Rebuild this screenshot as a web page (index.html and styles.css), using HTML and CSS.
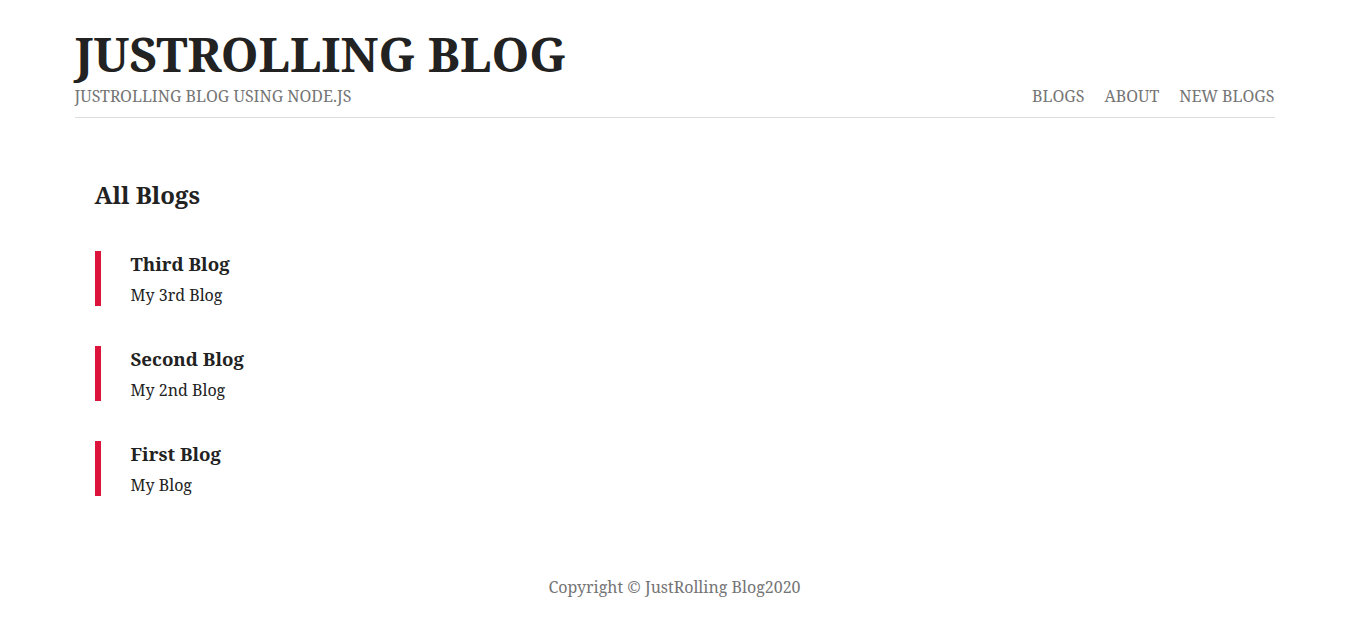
FILE: index.html
```html
<!DOCTYPE html>
<html>
<head>
<meta charset="utf-8">
<link rel="stylesheet" href="styles.css">
</head>
<body>
<div class="container">
  <header class="header">
    <h1 class="site-title">JUSTROLLING BLOG</h1>
    <div class="header-bottom">
      <p class="tagline">JUSTROLLING BLOG USING NODE.JS</p>
      <nav class="nav">
        <a href="#">BLOGS</a>
        <a href="#">ABOUT</a>
        <a href="#">NEW BLOGS</a>
      </nav>
    </div>
  </header>
  <main class="content">
    <h2 class="section-title">All Blogs</h2>
    <div class="post">
      <h3 class="post-title">Third Blog</h3>
      <p class="post-snippet">My 3rd Blog</p>
    </div>
    <div class="post">
      <h3 class="post-title">Second Blog</h3>
      <p class="post-snippet">My 2nd Blog</p>
    </div>
    <div class="post">
      <h3 class="post-title">First Blog</h3>
      <p class="post-snippet">My Blog</p>
    </div>
  </main>
  <footer class="footer">Copyright &copy; JustRolling Blog2020</footer>
</div>
</body>
</html>
```
FILE: styles.css
```css
* { box-sizing: border-box; }
body {
  margin: 0;
  font-family: "Noto Serif", "DejaVu Serif", serif;
  color: #222;
  background: #fff;
}
.container {
  width: 1200px;
  margin: 0 auto;
  padding-top: 24px;
}
.header {
  border-bottom: 1px solid #ddd;
}
.site-title {
  margin: 0;
  font-size: 48px;
  line-height: 60px;
  font-weight: 700;
  color: #222;
}
.header-bottom {
  display: flex;
  justify-content: space-between;
  align-items: center;
  padding-bottom: 9px;
}
.tagline {
  margin: 0;
  font-size: 16px;
  line-height: 24px;
  color: #757575;
}
.nav { display: flex; gap: 20px; }
.nav a {
  font-size: 16px;
  line-height: 24px;
  color: #757575;
  text-decoration: none;
}
.content {
  padding: 61px 20px 0;
}
.section-title {
  margin: 0 0 40px;
  font-size: 24px;
  line-height: 32px;
  font-weight: 700;
  color: #222;
}
.post {
  border-left: 6px solid crimson;
  padding-left: 30px;
  margin-bottom: 40px;
}
.post-title {
  margin: 0;
  font-size: 18.72px;
  line-height: 26px;
  font-weight: 700;
  color: #222;
}
.post-snippet {
  margin: 7px 0 0;
  font-size: 16px;
  line-height: 22px;
  color: #222;
}
.footer {
  text-align: center;
  font-size: 16px;
  line-height: 24px;
  color: #757575;
  padding: 39px 0 20px;
}
```
